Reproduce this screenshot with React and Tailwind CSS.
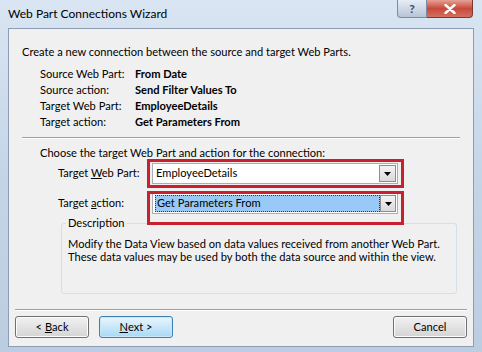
import React from 'react';

const font = { fontFamily: 'Lato, "Liberation Sans", sans-serif' };

const Combo = ({ text, selected }) => (
  <div className="relative w-[246px] h-[21px] bg-white border border-[#abadb3] flex items-center pl-[2px] pr-[1px]">
    <div className="flex-1 h-[17px] flex items-center">
      {selected ? (
        <span className="h-full w-[225px] flex items-center bg-[#99c9f7] border border-dotted border-[#333] pl-[1px]">{text}</span>
      ) : (
        <span className="pl-[1px]">{text}</span>
      )}
    </div>
    <div className="w-[17px] h-[17px] flex items-center justify-center border border-[#8d8d8d] bg-gradient-to-b from-[#f4f4f4] to-[#d9d9d9]">
      <svg width="7" height="4" viewBox="0 0 7 4"><path d="M0 0h7L3.5 4z" fill="#000" /></svg>
    </div>
  </div>
);

const Button = ({ children, primary, className = '' }) => (
  <div
    className={`w-[74px] h-[22px] flex items-center justify-center rounded-[3px] border ${
      primary
        ? 'border-[#3c7fb1] bg-gradient-to-b from-[#eaf6fd] to-[#a7d9f5] shadow-[inset_0_0_0_1px_#c6e8fa]'
        : 'border-[#707070] bg-gradient-to-b from-[#f2f2f2] to-[#d4d4d4] shadow-[inset_0_0_0_1px_#fcfcfc]'
    } ${className}`}
  >
    {children}
  </div>
);

export default function App() {
  const details = [
    ['Source Web Part:', 'From Date'],
    ['Source action:', 'Send Filter Values To'],
    ['Target Web Part:', 'EmployeeDetails'],
    ['Target action:', 'Get Parameters From'],
  ];

  return (
    <div
      className="w-[482px] h-[352px] overflow-hidden flex flex-col whitespace-nowrap bg-gradient-to-b from-[#d9e5f2] via-[#c5d5e8] to-[#bccde2] text-[11.1px] text-black"
      style={font}
    >
      {/* Title bar */}
      <div className="h-[28px] flex items-start shrink-0">
        <div className="pl-[8px] pt-[6px] text-[12px] leading-[16px] flex-1">Web Part Connections Wizard</div>
        <div className="flex mr-[9px]">
          <div className="w-[30px] h-[18px] rounded-bl-[4px] border border-t-0 border-[#7a8ba3] bg-gradient-to-b from-[#e6edf5] to-[#b7c5d7] flex items-center justify-center text-[12px] font-bold text-[#3a4a60]">
            ?
          </div>
          <div className="w-[46px] h-[18px] rounded-br-[4px] border border-l-0 border-t-0 border-[#7a3a33] bg-gradient-to-b from-[#e5a095] via-[#c8483b] to-[#d2705f] flex items-center justify-center">
            <svg width="12" height="10" viewBox="0 0 12 10">
              <path d="M1.5 1l9 8M10.5 1l-9 8" stroke="#fff" strokeWidth="2.4" strokeLinecap="round" />
            </svg>
          </div>
        </div>
      </div>

      {/* Client area */}
      <div className="mx-[8px] h-[319px] bg-[#f0f0f0] border border-[#8d9db3] flex flex-col">
        <div className="pl-[13px] pt-[15px] leading-[16px]">Create a new connection between the source and target Web Parts.</div>

        <div className="pl-[31px] pt-[6px] flex flex-col">
          {details.map(([label, value]) => (
            <div key={label} className="flex leading-[16px]">
              <span className="w-[95px]">{label}</span>
              <span className="font-bold">{value}</span>
            </div>
          ))}
        </div>

        <div className="ml-[13px] mr-[13px] mt-[7px] h-[2px] border-t border-[#a0a0a0] border-b border-b-white" />

        <div className="pl-[31px] pt-[6px] leading-[16px]">Choose the target Web Part and action for the connection:</div>

        <div className="pl-[49px] pt-[2px] flex items-center">
          <span className="w-[94px]">
            Target <span className="underline">W</span>eb Part:
          </span>
          <div className="relative">
            <Combo text="EmployeeDetails" />
            <div className="absolute left-[-5px] top-[-4px] w-[257px] h-[29px] border-[3px] border-[#c8202e]" />
          </div>
        </div>

        <div className="pl-[49px] pt-[9px] flex items-center relative z-10">
          <span className="w-[94px]">
            Target <span className="underline">a</span>ction:
          </span>
          <div className="relative">
            <Combo text="Get Parameters From" selected />
            <div className="absolute left-[-5px] top-[-2px] w-[257px] h-[34px] border-[3px] border-[#c8202e]" />
          </div>
        </div>

        {/* Description group */}
        <div className="ml-[52px] mr-[16px] mt-[9px] h-[71px] border border-[#d5dfe5] rounded-[3px] relative">
          <span className="absolute left-[4px] top-[-9px] bg-[#f0f0f0] px-[2px] leading-[16px]">Description</span>
          <div className="pl-[6px] pt-[13px] leading-[13px]">
            <div>Modify the Data View based on data values received from another Web Part.</div>
            <div>These data values may be used by both the data source and within the view.</div>
          </div>
        </div>

        <div className="ml-[6px] mr-[6px] mt-[15px] h-[2px] border-t border-[#a0a0a0] border-b border-b-white" />

        <div className="flex px-[6px] pt-[5px]">
          <Button>
            &lt; <span className="underline ml-[3px]">B</span>ack
          </Button>
          <Button primary className="ml-[10px]">
            <span className="underline">N</span>ext &gt;
          </Button>
          <div className="flex-1" />
          <Button>Cancel</Button>
        </div>
      </div>
    </div>
  );
}
